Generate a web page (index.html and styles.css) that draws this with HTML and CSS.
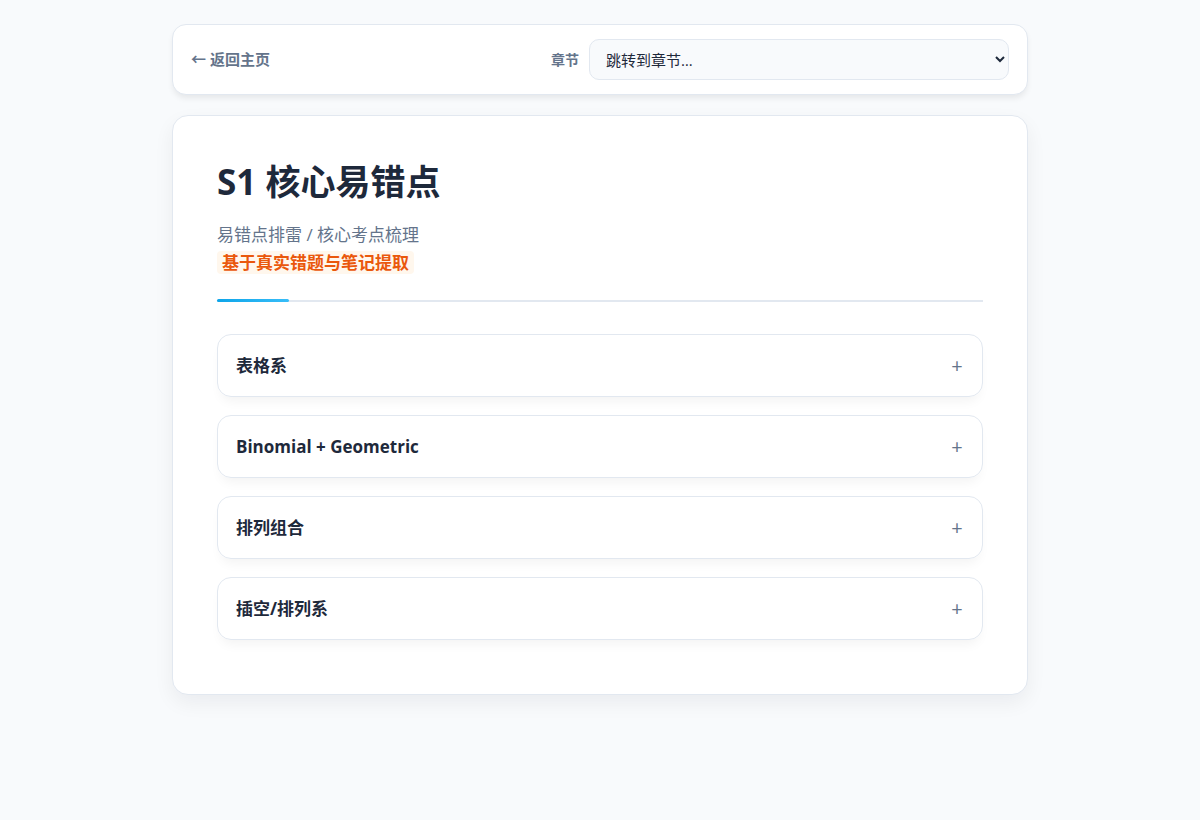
FILE: index.html
```html
<!DOCTYPE html>
<html lang="zh-CN">
<head>
    <meta charset="UTF-8">
    <meta name="viewport" content="width=device-width, initial-scale=1.0">
    <title>S1 核心易错点</title>
    <link rel="stylesheet" href="styles.css">
</head>
<body>
    <nav class="topbar">
        <a class="back-link" href="index.html">← 返回主页</a>
        <div class="chapter-nav">
            <label for="chapterSelect">章节</label>
            <select id="chapterSelect">
                <option value="">跳转到章节…</option>
                <option value="sec-1">表格系</option>
                <option value="sec-2">Binomial + Geometric</option>
                <option value="sec-3">排列组合</option>
                <option value="sec-4">插空/排列系</option>
            </select>
        </div>
    </nav>

    <main class="container">
        <header class="page-header">
            <h1>S1 核心易错点</h1>
            <p class="subtitle">易错点排雷 / 核心考点梳理<br><span class="highlight">基于真实错题与笔记提取</span></p>
        </header>

        <section class="card" id="sec-1">
            <button class="card-toggle" type="button"><span>表格系</span><span class="icon">+</span></button>
        </section>
        <section class="card" id="sec-2">
            <button class="card-toggle" type="button"><span>Binomial + Geometric</span><span class="icon">+</span></button>
        </section>
        <section class="card" id="sec-3">
            <button class="card-toggle" type="button"><span>排列组合</span><span class="icon">+</span></button>
        </section>
        <section class="card" id="sec-4">
            <button class="card-toggle" type="button"><span>插空/排列系</span><span class="icon">+</span></button>
        </section>
    </main>
</body>
</html>
```
FILE: styles.css
```css
* {
    box-sizing: border-box;
}

body {
    margin: 0;
    padding: 24px;
    background: #f8fafc;
    color: #1e293b;
    font-family: "Open Sans", "Noto Sans CJK SC", sans-serif;
    font-size: 17px;
    line-height: 28px;
}

.topbar {
    max-width: 856px;
    margin: 0 auto 20px;
    padding: 14px 18px;
    display: flex;
    align-items: center;
    justify-content: space-between;
    background: #fff;
    border: 1px solid #e2e8f0;
    border-radius: 14px;
    box-shadow: 0 4px 6px -1px rgba(0, 0, 0, 0.08);
    line-height: 27px;
}

.back-link {
    color: #64748b;
    font-size: 15px;
    font-weight: 600;
    text-decoration: none;
}

.chapter-nav {
    display: flex;
    align-items: center;
    gap: 10px;
}

.chapter-nav label {
    color: #64748b;
    font-size: 14px;
    font-weight: 600;
}

.chapter-nav select {
    width: 420px;
    height: 41px;
    padding: 0 12px;
    background: #f8fafc;
    border: 1px solid #e2e8f0;
    border-radius: 10px;
    color: #1e293b;
    font-family: inherit;
    font-size: 15px;
}

.container {
    max-width: 856px;
    margin: 0 auto;
    padding: 44px 44px 54px;
    background: #fff;
    border: 1px solid #e2e8f0;
    border-radius: 16px;
    box-shadow: 0 8px 20px rgba(15, 23, 42, 0.06);
}

.page-header {
    position: relative;
    margin-bottom: 32px;
    padding-bottom: 23px;
    border-bottom: 2px solid #e2e8f0;
}

.page-header::after {
    content: "";
    position: absolute;
    left: 0;
    bottom: -2px;
    width: 72px;
    height: 3px;
    background: linear-gradient(90deg, #0ea5e9, #38bdf8);
    border-radius: 2px;
}

h1 {
    margin: 0 0 18px;
    font-size: 35px;
    line-height: 43px;
    font-weight: 700;
}

.subtitle {
    margin: 0;
    color: #64748b;
}

.highlight {
    padding: 0 5px;
    background: #fff7ed;
    border-radius: 4px;
    color: #ea580c;
    font-weight: 700;
}

.card {
    margin-bottom: 18px;
    border: 1px solid #e2e8f0;
    border-radius: 14px;
    box-shadow: 0 8px 12px -4px rgba(0, 0, 0, 0.05);
}

.card:last-child {
    margin-bottom: 0;
}

.card-toggle {
    width: 100%;
    padding: 17px 18px 16px;
    display: flex;
    align-items: center;
    justify-content: space-between;
    background: none;
    border: 0;
    color: inherit;
    font: inherit;
    font-weight: 700;
    cursor: pointer;
}

.icon {
    width: 14px;
    color: #64748b;
    font-size: 20px;
    font-weight: 400;
    text-align: center;
}
```
